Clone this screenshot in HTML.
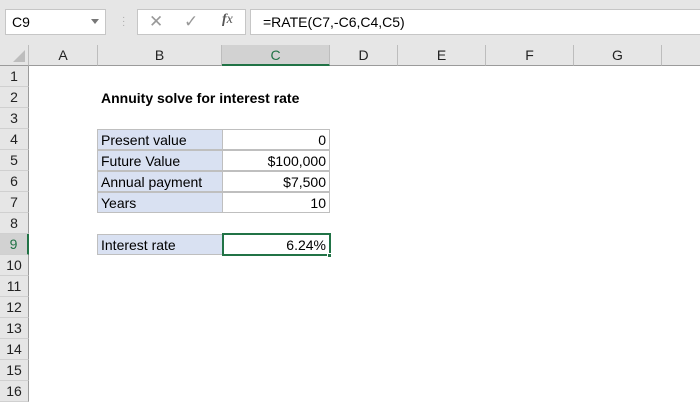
<!DOCTYPE html>
<html><head><style>
*{margin:0;padding:0;box-sizing:border-box}
body{width:700px;height:400px;overflow:hidden;background:#fff;font-family:"Liberation Sans",Calibri,sans-serif;position:relative;font-size:14px;color:#000}
.abs{position:absolute}
.top{left:0;top:0;width:700px;height:45px;background:#e6e6e6}
.box{background:#fff;border:1px solid #c6c6c6}
.hdr{top:45px;height:21px;background:#e6e6e6;border-bottom:1px solid #9b9b9b;border-right:1px solid #bdbdbd;text-align:center;line-height:21px;font-size:14px;color:#222}
.rh{left:0;width:29px;height:21px;background:#e6e6e6;border-right:1px solid #9b9b9b;border-bottom:1px solid #d0d0d0;text-align:center;line-height:21px;font-size:14px;color:#222}
.cell{height:21px;line-height:20px;font-size:14px;padding:0 3px;border:1px solid #bfbfbf}
.lab{background:#d9e1f2}
.val{text-align:right;background:#fff}
</style></head><body>
<div class="abs top"></div>
<div class="abs box" style="left:5px;top:9px;width:101px;height:26px;line-height:24px;padding-left:6px;font-size:14px">C9</div>
<div class="abs" style="left:91px;top:19px;width:0;height:0;border-left:4px solid transparent;border-right:4px solid transparent;border-top:5px solid #777"></div>
<div class="abs" style="left:122px;top:16px;color:#aaa;font-size:10px;line-height:4px">·<br>·<br>·</div>
<div class="abs box" style="left:137px;top:9px;width:109px;height:26px"></div>
<div class="abs" style="left:149px;top:12px;color:#999;font-size:17px">✕</div>
<div class="abs" style="left:184px;top:12px;color:#999;font-size:17px">✓</div>
<div class="abs" style="left:222px;top:12px;color:#555;font-size:14px;font-style:italic;font-family:'Liberation Serif',serif"><b>f</b>x</div>
<div class="abs box" style="left:250px;top:9px;width:460px;height:26px;line-height:24px;padding-left:12px;font-size:14px">=RATE(C7,-C6,C4,C5)</div>
<div class="abs hdr" style="left:0;width:29px"><div style="position:absolute;right:3px;bottom:3px;width:0;height:0;border-left:12px solid transparent;border-bottom:12px solid #bdbdbd"></div></div>
<div class="abs hdr" style="left:29px;width:69px">A</div>
<div class="abs hdr" style="left:98px;width:124px">B</div>
<div class="abs hdr" style="left:222px;width:108px;background:#d2d2d2;border-bottom:2px solid #217346;color:#217346">C</div>
<div class="abs hdr" style="left:330px;width:68px">D</div>
<div class="abs hdr" style="left:398px;width:88px">E</div>
<div class="abs hdr" style="left:486px;width:88px">F</div>
<div class="abs hdr" style="left:574px;width:88px">G</div>
<div class="abs hdr" style="left:662px;width:40px"></div>
<div class="abs rh" style="top:66px">1</div>
<div class="abs rh" style="top:87px">2</div>
<div class="abs rh" style="top:108px">3</div>
<div class="abs rh" style="top:129px">4</div>
<div class="abs rh" style="top:150px">5</div>
<div class="abs rh" style="top:171px">6</div>
<div class="abs rh" style="top:192px">7</div>
<div class="abs rh" style="top:213px">8</div>
<div class="abs rh" style="top:234px;background:#d2d2d2;color:#217346;border-right:2px solid #217346">9</div>
<div class="abs rh" style="top:255px">10</div>
<div class="abs rh" style="top:276px">11</div>
<div class="abs rh" style="top:297px">12</div>
<div class="abs rh" style="top:318px">13</div>
<div class="abs rh" style="top:339px">14</div>
<div class="abs rh" style="top:360px">15</div>
<div class="abs rh" style="top:381px">16</div>
<div class="abs" style="left:101px;top:88px;line-height:21px;font-weight:bold;font-size:14px">Annuity solve for interest rate</div>
<div class="abs cell lab" style="left:97px;top:129px;width:126px">Present value</div>
<div class="abs cell val" style="left:222px;top:129px;width:108px">0</div>
<div class="abs cell lab" style="left:97px;top:150px;width:126px">Future Value</div>
<div class="abs cell val" style="left:222px;top:150px;width:108px">$100,000</div>
<div class="abs cell lab" style="left:97px;top:171px;width:126px">Annual payment</div>
<div class="abs cell val" style="left:222px;top:171px;width:108px">$7,500</div>
<div class="abs cell lab" style="left:97px;top:192px;width:126px">Years</div>
<div class="abs cell val" style="left:222px;top:192px;width:108px">10</div>
<div class="abs cell lab" style="left:97px;top:234px;width:126px">Interest rate</div>
<div class="abs cell val" style="left:222px;top:233px;width:109px;height:23px;border:2px solid #217346">6.24%</div>
<div class="abs" style="left:327px;top:253px;width:5px;height:5px;background:#217346;border:1px solid #fff"></div>
</body></html>
